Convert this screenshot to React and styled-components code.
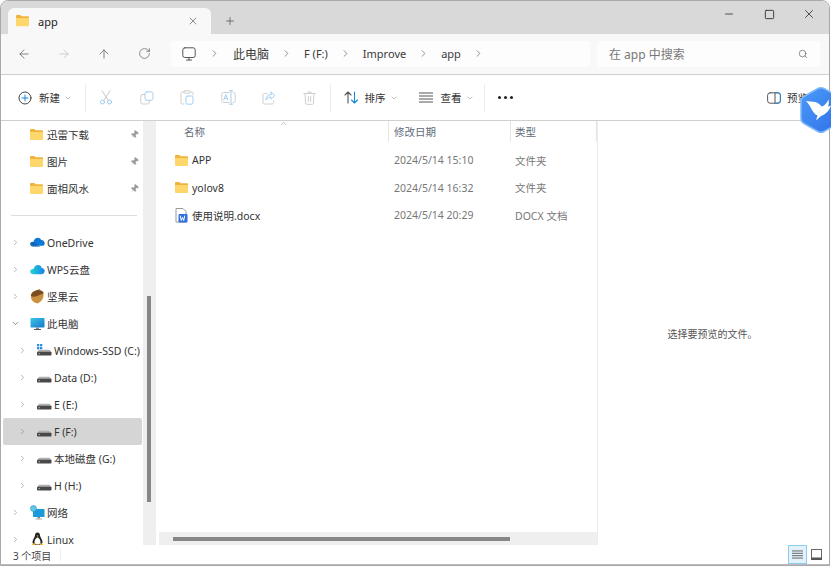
import React from 'react';
import styled, { createGlobalStyle } from 'styled-components';
import { ArrowLeft, ArrowRight, ArrowUp, RotateCw, ChevronRight, ChevronDown, ChevronUp, Search, X, Plus, Minus, Square, Pin } from 'lucide-react';

const Global = createGlobalStyle`
  html, body { margin: 0; padding: 0; background: #fff; }
  #root { width: 831px; height: 567px; overflow: hidden; position: relative; }
  * { box-sizing: border-box; }
`;
const FONT = `"Noto Sans", "Noto Sans CJK SC", sans-serif`;

const Page = styled.div`width:831px;height:567px;position:relative;overflow:hidden;font-family:${FONT};font-size:11px;color:#333;background:#fbfbfb;`;
const Win = styled.div`width:830px;height:566px;border:1px solid #a9a9a9;border-radius:8px 8px 0 0;overflow:hidden;display:flex;flex-direction:column;background:#fff;`;

const TitleBar = styled.div`height:33px;background:#d9d9d9;display:flex;padding:7px 0 0 7px;flex:none;`;
const Tab = styled.div`width:203px;height:26px;background:#f8f8f8;border-radius:6px 6px 0 0;display:flex;align-items:center;padding:0 12px 0 8px;font-size:11px;color:#222;`;
const TabLabel = styled.span`margin-left:9px;flex:1;`;
const NewTab = styled.div`width:38px;display:flex;align-items:center;justify-content:center;height:26px;`;
const Controls = styled.div`margin-left:auto;display:flex;margin-top:-7px;height:26px;align-items:center;`;
const Ctl = styled.div`width:40px;display:flex;justify-content:center;align-items:center;`;

const NavBar = styled.div`height:41px;flex:none;background:#f8f8f8;border-bottom:1px solid #cfcfcf;display:flex;align-items:center;padding:0 9px 1px 3px;`;
const NavBtn = styled.div`width:40px;display:flex;justify-content:center;align-items:center;color:${p => p.$off ? '#bdbdbd' : '#555'};`;
const Address = styled.div`margin-left:7px;width:419px;height:26px;border-radius:4px;background:#fdfdfd;display:flex;align-items:center;padding-left:11px;color:#3a3a3a;`;
const Crumb = styled.span`white-space:nowrap;font-size:${p => p.$cjk ? 12 : 11}px;`;
const Sep = styled.span`width:${p => p.$w || 35}px;display:flex;justify-content:center;color:#555;flex:none;`;
const SearchBox = styled.div`margin-left:7px;width:223px;height:26px;border-radius:4px;background:#fdfdfd;display:flex;align-items:center;justify-content:space-between;padding:0 12px;font-size:12px;color:#777;`;

const Toolbar = styled.div`height:46px;flex:none;background:#fff;border-bottom:1px solid #d0d0d0;display:flex;align-items:center;padding:0 0 0 17px;`;
const Menu = styled.div`display:flex;align-items:center;font-size:10.5px;color:#333;width:${p => p.$w}px;padding-left:${p => p.$pl || 0}px;flex:none;`;
const MenuLabel = styled.span`margin-left:${p => p.$ml || 7}px;margin-right:4px;white-space:nowrap;`;
const VSep = styled.div`width:1px;height:28px;background:#ececec;flex:none;`;
const Tool = styled.div`width:40.6px;display:flex;justify-content:center;align-items:center;flex:none;`;
const More = styled.div`display:flex;gap:3px;margin-left:13px;`;
const Dot = styled.i`width:3px;height:3px;border-radius:50%;background:#222;display:block;`;
const PreviewBtn = styled.div`margin-left:auto;display:flex;align-items:center;width:62px;font-size:10.5px;gap:6px;white-space:nowrap;`;

const Main = styled.div`flex:none;height:424px;display:flex;background:#fff;`;
const Side = styled.div`width:142px;height:424px;overflow:hidden;flex:none;padding-left:2px;`;
const Row = styled.div`height:27px;width:139px;display:flex;align-items:center;padding-left:${p => p.$lvl ? 15 : 8}px;background:${p => p.$sel ? '#d5d5d5' : 'transparent'};border-radius:2px;font-size:10.5px;color:#333;white-space:nowrap;`;
const Chev = styled.span`width:9px;display:flex;justify-content:center;color:#777;flex:none;`;
const RowIcon = styled.span`margin-left:10px;width:15px;height:15px;display:flex;align-items:center;justify-content:center;flex:none;`;
const RowText = styled.span`margin-left:${p => p.$ml ?? 2}px;`;
const QuickRow = styled(Row)`padding-left:27px;`;
const QuickIcon = styled.span`width:14px;display:flex;align-items:center;`;
const PinWrap = styled.span`margin-left:auto;margin-right:3px;display:flex;color:#9a9a9a;`;
const Divider = styled.div`height:27px;display:flex;align-items:center;padding-left:8px;`;
const DividerLine = styled.div`width:126px;height:1px;background:#dedede;`;
const Track = styled.div`width:13px;background:#efefef;flex:none;padding:175px 0 0 4px;height:424px;margin-right:3px;`;
const Thumb = styled.div`width:4px;height:206px;background:#868686;`;

const Content = styled.div`width:438px;flex:none;display:flex;flex-direction:column;`;
const Files = styled.div`flex:1;position:relative;margin-left:-1px;`;
const Head = styled.div`display:grid;grid-template-columns:231px 122px 86px;height:21px;`;
const HeadCell = styled.div`padding-left:${p => p.$pl}px;display:flex;align-items:center;color:#606a78;font-size:10.5px;border-right:1px solid #e5e5e5;`;
const SortMark = styled.span`position:absolute;left:121px;top:-2px;color:#777;display:flex;`;
const FileList = styled.div`padding-top:4.5px;`;
const FileRow = styled.div`display:grid;grid-template-columns:231px 122px 86px;height:27.5px;align-items:center;font-size:10.5px;color:#777;`;
const NameCell = styled.div`display:flex;align-items:center;padding-left:17px;color:#333;gap:4px;`;
const Cell = styled.div`padding-left:${p => p.$pl}px;white-space:nowrap;`;
const HTrack = styled.div`height:13px;background:#efefef;padding:5px 0 0 14px;flex:none;`;
const HThumb = styled.div`width:337px;height:4px;background:#868686;`;

const Preview = styled.div`flex:1;border-left:1px solid #ececec;display:flex;align-items:center;justify-content:center;font-size:10px;color:#555;padding-right:2px;`;

const Status = styled.div`height:20px;flex:none;display:flex;align-items:center;padding:0 0 0 12px;font-size:10px;color:#444;background:#fff;border-bottom:1px solid #bbb;`;
const StatusText = styled.span`padding-top:1px;`;
const StatusSep = styled.div`width:1px;height:12px;background:#efefef;margin-left:9px;`;
const Views = styled.div`margin-left:auto;display:flex;align-items:center;padding-right:5px;gap:4px;`;
const ListBtn = styled.div`width:19px;height:19px;display:flex;align-items:center;justify-content:center;background:#e3f1fb;border:1px solid #8fcdf0;`;
const TileBtn = styled.div`width:13px;height:19px;display:flex;align-items:center;`;
const Badge = styled.div`position:absolute;left:799px;top:86px;width:44px;height:48px;`;

const S = { fill: 'none', strokeLinecap: 'round', strokeLinejoin: 'round' };

const Folder = ({ size = 14 }) => (
  <svg width={size} height={size * 0.86} viewBox="0 0 14 12">
    <path d="M0 1.2C0 .5.5 0 1.2 0h3.4l1.6 1.4h6.6c.7 0 1.2.5 1.2 1.2V4H0z" fill="#eeb43c" />
    <path d="M0 3.2h14v7.6c0 .7-.5 1.2-1.2 1.2H1.2C.5 12 0 11.5 0 10.8z" fill="#fdd66c" />
  </svg>
);
const Doc = () => (
  <svg width="13" height="15" viewBox="0 0 13 15">
    <path d="M1 .5h7l3 3v10.500H1z" fill="#fff" stroke="#9a9a9a" />
    <rect x="3.500" y="6" width="9" height="8.500" rx="1" fill="#2f6fde" />
    <path d="M5.300 8l1 4.500 1.200-3.200 1.200 3.200 1-4.500" {...S} stroke="#fff" strokeWidth="1" />
  </svg>
);
const Drive = ({ win }) => (
  <svg width="15" height="14" viewBox="0 0 15 14">
    <path d="M2 5.800h10.500l1.800 2.200H.2z" fill="#b0b0b0" />
    <rect x="0" y="7.800" width="14.500" height="3.700" rx=".8" fill="#484848" />
    <rect x="1.500" y="9.200" width="1.600" height="1" fill="#7fd27f" />
    {win && <g fill="#2b8fe0"><rect x="0" y="0" width="2.300" height="2.300" /><rect x="3" y="0" width="2.300" height="2.300" /><rect x="0" y="3" width="2.300" height="2.300" /><rect x="3" y="3" width="2.300" height="2.300" /></g>}
  </svg>
);
const OneDrive = () => (
  <svg width="15" height="11" viewBox="0 0 15 10">
    <path d="M3.500 4.200C4 1.500 6 .3 7.800.3c1.600 0 2.800.9 3.300 2.200 2-.2 3.600 1.300 3.600 3.200 0 1.200-.5 2-1.200 2.600H3C1.500 8.300.3 7.300.3 6c0-1 1.200-1.900 3.200-1.800z" fill="#0f78d4" />
    <path d="M3 9.300C1.300 9.300.3 8 .3 6.700.3 5.300 1.700 4.300 3.500 4.600l4 2.800 3 1.900z" fill="#0a5cb0" opacity=".75" />
  </svg>
);
const WpsCloud = () => (
  <svg width="15" height="12" viewBox="0 0 15 11">
    <defs><linearGradient id="wps" x1="0" x2="1"><stop offset="0" stopColor="#22d6d6" /><stop offset="1" stopColor="#1b7fe8" /></linearGradient></defs>
    <path d="M3.500 4.500C4 2 6 .6 8 .6c2 0 3.300 1.300 3.700 2.800 1.800 0 3 1.400 3 3.100 0 1.900-1.400 3.300-3.200 3.300H3.300C1.500 9.800.2 8.500.2 7c0-1.500 1.400-2.700 3.300-2.500z" fill="url(#wps)" />
  </svg>
);
const Nut = () => (
  <svg width="15" height="15" viewBox="0 0 15 15">
    <path d="M1 7.500c0-2 2-3.500 5-4.500 3-.6 7-.5 7.500 1.500.5 3-1 8-6 10C3 13.500 1 11 1 7.500z" fill="#cb9040" />
    <path d="M.8 6.800C1.300 3 5.500 .8 8.500 1c2.800.2 5 1.200 5.200 3.500-2 .3-4 1.500-6.500 2.600-2.300.7-4.800 1-6.400-.3z" fill="#7c4e1e" />
    <path d="M8 1.500L9.500 0" stroke="#7c4e1e" />
  </svg>
);
const PC = () => (
  <svg width="15" height="14" viewBox="0 0 15 14">
    <defs><linearGradient id="pc" x1="0" x2="1" y1="0" y2="1"><stop offset="0" stopColor="#3cc6e8" /><stop offset="1" stopColor="#1679c9" /></linearGradient></defs>
    <rect x=".5" y="1" width="14" height="9.500" rx=".7" fill="url(#pc)" />
    <rect x="6" y="10.500" width="3" height="1.500" fill="#8a8a8a" />
    <rect x="4" y="12" width="7" height="1" fill="#555" />
  </svg>
);
const Net = () => (
  <svg width="15" height="15" viewBox="0 0 15 15">
    <rect x="3" y="4" width="11.500" height="8" rx=".6" fill="#1a9ad8" />
    <rect x="7.500" y="12" width="2.500" height="1.500" fill="#888" />
    <rect x="5.500" y="13.500" width="6.500" height="1" fill="#aaa" />
    <circle cx="3.500" cy="3.500" r="3" fill="#5cc8e8" stroke="#2e7fa8" strokeWidth=".5" />
  </svg>
);
const Penguin = () => (
  <svg width="13" height="15" viewBox="0 0 13 15">
    <path d="M6.500.5c1.800 0 2.500 1.400 2.500 3 0 1.500 2.500 4 2.500 6.500 0 1.500-1 3-5 3s-5-1.500-5-3c0-2.500 2.500-5 2.500-6.500 0-1.600.7-3 2.500-3z" fill="#222" />
    <path d="M6.500 5.500c1.300 0 3 2.500 3 4.500s-1.500 2.500-3 2.500-3-.5-3-2.500 1.700-4.500 3-4.500z" fill="#fff" />
    <path d="M1 12l3-1 .5 3-2.500.5zM12 12l-3-1-.5 3 2.500.5z" fill="#f2b01e" />
    <path d="M5.500 3.600h2L6.500 5z" fill="#f2b01e" />
  </svg>
);
const MonitorIco = () => (
  <svg width="14" height="14" viewBox="0 0 14 14" {...S} stroke="#555" strokeWidth="1" style={{ flex: 'none' }}>
    <rect x=".8" y=".8" width="12.400" height="9.700" rx="2" />
    <path d="M4.500 13h5M7 10.500V13" />
  </svg>
);
const CircleNew = () => (
  <svg width="14" height="14" viewBox="0 0 14 14" {...S} strokeWidth="1">
    <circle cx="7" cy="7" r="6" stroke="#444" />
    <path d="M7 4v6M4 7h6" stroke="#1a86d8" />
  </svg>
);
const Cut = () => (
  <svg width="14" height="15" viewBox="0 0 14 15" {...S} strokeWidth="1">
    <path d="M3 .8l6 9.200M11 .8L5 10" stroke="#c9c9c9" />
    <circle cx="3.500" cy="12" r="2" stroke="#9cc8ec" />
    <circle cx="10.500" cy="12" r="2" stroke="#9cc8ec" />
  </svg>
);
const Copy = () => (
  <svg width="14" height="14" viewBox="0 0 14 14" {...S} strokeWidth="1">
    <rect x=".8" y="3.500" width="8.500" height="9.500" rx="2" stroke="#cfcfcf" />
    <rect x="5" y=".8" width="8" height="8.500" rx="2" fill="#fff" stroke="#a5cff0" />
  </svg>
);
const Paste = () => (
  <svg width="14" height="15" viewBox="0 0 14 15" {...S} strokeWidth="1">
    <path d="M4 2H2.300C1.500 2 1 2.500 1 3.300v9.400c0 .8.500 1.300 1.300 1.300H4M10 2h1.700c.8 0 1.300.5 1.300 1.300V5" stroke="#cfcfcf" />
    <rect x="4" y=".8" width="6" height="2.400" rx=".8" stroke="#cfcfcf" />
    <rect x="6" y="6" width="7" height="8.200" rx="1.500" stroke="#a5cff0" />
  </svg>
);
const Rename = () => (
  <svg width="15" height="15" viewBox="0 0 15 15" {...S} strokeWidth="1">
    <path d="M8 2.500H2.300C1.300 2.500.8 3 .8 4v7c0 1 .5 1.500 1.500 1.500H8M12 2.500h.7c1 0 1.500.5 1.500 1.500v7c0 1-.5 1.500-1.500 1.500H12" stroke="#cfcfcf" />
    <path d="M10 .8v13.400M8.500 .8h3M8.500 14.200h3" stroke="#a5cff0" />
    <path d="M2.800 10l2-5.500L6.800 10M3.500 8.300h2.700" stroke="#a5cff0" />
  </svg>
);
const Share = () => (
  <svg width="14" height="14" viewBox="0 0 14 14" {...S} strokeWidth="1">
    <path d="M5 2.500H2.500C1.500 2.500 1 3 1 4v7.500c0 1 .5 1.500 1.500 1.500H10c1 0 1.500-.5 1.500-1.500V10" stroke="#cfcfcf" />
    <path d="M9 1l4 3.500L9 8V6C6.500 6 5 7 4 9c0-3 1.500-5.200 5-5.500z" stroke="#a5cff0" />
  </svg>
);
const Trash = () => (
  <svg width="13" height="14" viewBox="0 0 13 14" {...S} strokeWidth="1" stroke="#cfcfcf">
    <path d="M.8 2.500h11.400M5 2.500V1h3v1.500M2 2.500l.5 9.500c0 .8.500 1.300 1.200 1.300h5.600c.7 0 1.200-.5 1.200-1.300l.5-9.500M5.300 5.500v5M7.700 5.500v5" />
  </svg>
);
const SortIco = () => (
  <svg width="15" height="13" viewBox="0 0 15 13" {...S} strokeWidth="1.100">
    <path d="M4 12V1M1 4l3-3 3 3" stroke="#555" />
    <path d="M10.500 1v11M7.500 9l3 3 3-3" stroke="#1a86d8" />
  </svg>
);
const Lines = ({ w = 14, c = '#555' }) => (
  <svg width={w} height="11" viewBox="0 0 14 11" stroke={c} strokeWidth="1">
    <path d="M0 1h14M0 4h14M0 7h14M0 10h14" />
  </svg>
);
const PaneIco = () => (
  <svg width="14" height="12" viewBox="0 0 14 12" {...S} strokeWidth="1">
    <rect x=".6" y=".8" width="12.800" height="10.400" rx="2.500" stroke="#555" />
    <path d="M8 .8v10.400" stroke="#555" />
    <path d="M9 .8h2c1.500 0 2.400 1 2.400 2.500v5.400c0 1.500-.9 2.500-2.400 2.500H9" stroke="#1a86d8" />
  </svg>
);
const TileIco = () => (
  <svg width="11" height="11" viewBox="0 0 11 11">
    <rect x=".5" y=".5" width="10" height="10" fill="#fff" stroke="#666" />
    <rect x="0" y="8.500" width="11" height="2.500" fill="#555" />
  </svg>
);
const BirdBadge = () => (
  <svg width="44" height="48" viewBox="0 0 44 48">
    <defs><linearGradient id="hex" x1="0" y1="0" x2="1" y2="1"><stop offset="0" stopColor="#4b9bf8" /><stop offset="1" stopColor="#2f6fe8" /></linearGradient></defs>
    <path d="M19 2.500c1.800-1 4.200-1 6 0L39 10.500c1.800 1 3 3 3 5v17c0 2-1.200 4-3 5L25 45.500c-1.800 1-4.200 1-6 0L5 37.500c-1.800-1-3-3-3-5v-17c0-2 1.200-4 3-5z" fill="url(#hex)" stroke="#7db6fb" strokeWidth="1.500" />
    <path d="M7 15c3 0 6 1 9 1 3 .5 5 2.500 6.500 4.500 2-.5 4.500-2 7-7 .5 2.500.5 4.500-.5 7 1 0 2-.3 3-1-1 4-5 9-10 10.500l-5 4.500 1.500-5C13 27.500 13 21 7 15z" fill="#fff" />
  </svg>
);

const chev = <ChevronRight size={11} strokeWidth={1.4} />;
const quick = ['迅雷下载', '图片', '面相风水'];
const tree = [
  { t: 'OneDrive', i: <OneDrive /> },
  { t: 'WPS云盘', i: <WpsCloud /> },
  { t: '坚果云', i: <Nut /> },
  { t: '此电脑', i: <PC />, open: true },
  { t: 'Windows-SSD (C:)', i: <Drive win />, lvl: 1 },
  { t: 'Data (D:)', i: <Drive />, lvl: 1 },
  { t: 'E (E:)', i: <Drive />, lvl: 1 },
  { t: 'F (F:)', i: <Drive />, lvl: 1, sel: true },
  { t: '本地磁盘 (G:)', i: <Drive />, lvl: 1 },
  { t: 'H (H:)', i: <Drive />, lvl: 1 },
  { t: '网络', i: <Net /> },
  { t: 'Linux', i: <Penguin /> },
];
const files = [
  { n: 'APP', d: '2024/5/14 15:10', k: '文件夹', i: <Folder size={13} /> },
  { n: 'yolov8', d: '2024/5/14 16:32', k: '文件夹', i: <Folder size={13} /> },
  { n: '使用说明.docx', d: '2024/5/14 20:29', k: 'DOCX 文档', i: <Doc /> },
];
const crumbs = [
  { t: '此电脑', cjk: true },
  { t: 'F (F:)' },
  { t: 'Improve' },
  { t: 'app' },
];

export default function App() {
  return (
    <Page>
      <Global />
      <Win>
        <TitleBar>
          <Tab>
            <Folder size={13} />
            <TabLabel>app</TabLabel>
            <X size={12} strokeWidth={1.2} color="#444" />
          </Tab>
          <NewTab><Plus size={12} strokeWidth={1.2} color="#333" /></NewTab>
          <Controls>
            <Ctl><Minus size={12} strokeWidth={1.5} color="#222" /></Ctl>
            <Ctl><Square size={11} strokeWidth={1.8} color="#222" /></Ctl>
            <Ctl><X size={14} strokeWidth={1.3} color="#222" /></Ctl>
          </Controls>
        </TitleBar>
        <NavBar>
          <NavBtn><ArrowLeft size={14} strokeWidth={1.2} /></NavBtn>
          <NavBtn $off><ArrowRight size={14} strokeWidth={1.2} /></NavBtn>
          <NavBtn><ArrowUp size={14} strokeWidth={1.2} /></NavBtn>
          <NavBtn><RotateCw size={13} strokeWidth={1.2} /></NavBtn>
          <Address>
            <MonitorIco />
            <Sep $w={37}>{chev}</Sep>
            {crumbs.map((c) => (
              <React.Fragment key={c.t}>
                <Crumb $cjk={c.cjk}>{c.t}</Crumb>
                <Sep>{chev}</Sep>
              </React.Fragment>
            ))}
          </Address>
          <SearchBox>
            <span>在 app 中搜索</span>
            <Search size={10} strokeWidth={1.5} color="#555" />
          </SearchBox>
        </NavBar>
        <Toolbar>
          <Menu $w={67}>
            <CircleNew />
            <MenuLabel>新建</MenuLabel>
            <ChevronDown size={8} strokeWidth={1.4} color="#777" />
          </Menu>
          <VSep />
          <Tool><Cut /></Tool>
          <Tool><Copy /></Tool>
          <Tool><Paste /></Tool>
          <Tool><Rename /></Tool>
          <Tool><Share /></Tool>
          <Tool><Trash /></Tool>
          <VSep />
          <Menu $w={76} $pl={13}>
            <SortIco />
            <MenuLabel $ml={6}>排序</MenuLabel>
            <ChevronDown size={8} strokeWidth={1.4} color="#777" />
          </Menu>
          <Menu $w={77} $pl={12}>
            <Lines />
            <MenuLabel $ml={8}>查看</MenuLabel>
            <ChevronDown size={8} strokeWidth={1.4} color="#777" />
          </Menu>
          <VSep />
          <More><Dot /><Dot /><Dot /></More>
          <PreviewBtn><PaneIco /><span>预览</span></PreviewBtn>
        </Toolbar>
        <Main>
          <Side>
            {quick.map((q) => (
              <QuickRow key={q}>
                <QuickIcon><Folder size={13} /></QuickIcon>
                <RowText $ml={3}>{q}</RowText>
                <PinWrap><Pin size={9} fill="#9a9a9a" strokeWidth={1} style={{ transform: 'rotate(40deg)' }} /></PinWrap>
              </QuickRow>
            ))}
            <Divider><DividerLine /></Divider>
            {tree.map((r) => (
              <Row key={r.t} $lvl={r.lvl} $sel={r.sel}>
                <Chev>{r.open ? <ChevronDown size={11} strokeWidth={1.6} color="#444" /> : chev}</Chev>
                <RowIcon>{r.i}</RowIcon>
                <RowText>{r.t}</RowText>
              </Row>
            ))}
          </Side>
          <Track><Thumb /></Track>
          <Content>
            <Files>
              <SortMark><ChevronUp size={9} strokeWidth={1.2} /></SortMark>
              <Head>
                <HeadCell $pl={26}>名称</HeadCell>
                <HeadCell $pl={5}>修改日期</HeadCell>
                <HeadCell $pl={4}>类型</HeadCell>
              </Head>
              <FileList>
                {files.map((f) => (
                  <FileRow key={f.n}>
                    <NameCell>{f.i}<span>{f.n}</span></NameCell>
                    <Cell $pl={5}>{f.d}</Cell>
                    <Cell $pl={4}>{f.k}</Cell>
                  </FileRow>
                ))}
              </FileList>
            </Files>
            <HTrack><HThumb /></HTrack>
          </Content>
          <Preview>选择要预览的文件。</Preview>
        </Main>
        <Status>
          <StatusText>3 个项目</StatusText>
          <StatusSep />
          <Views>
            <ListBtn><Lines w={11} c="#444" /></ListBtn>
            <TileBtn><TileIco /></TileBtn>
          </Views>
        </Status>
      </Win>
      <Badge><BirdBadge /></Badge>
    </Page>
  );
}
